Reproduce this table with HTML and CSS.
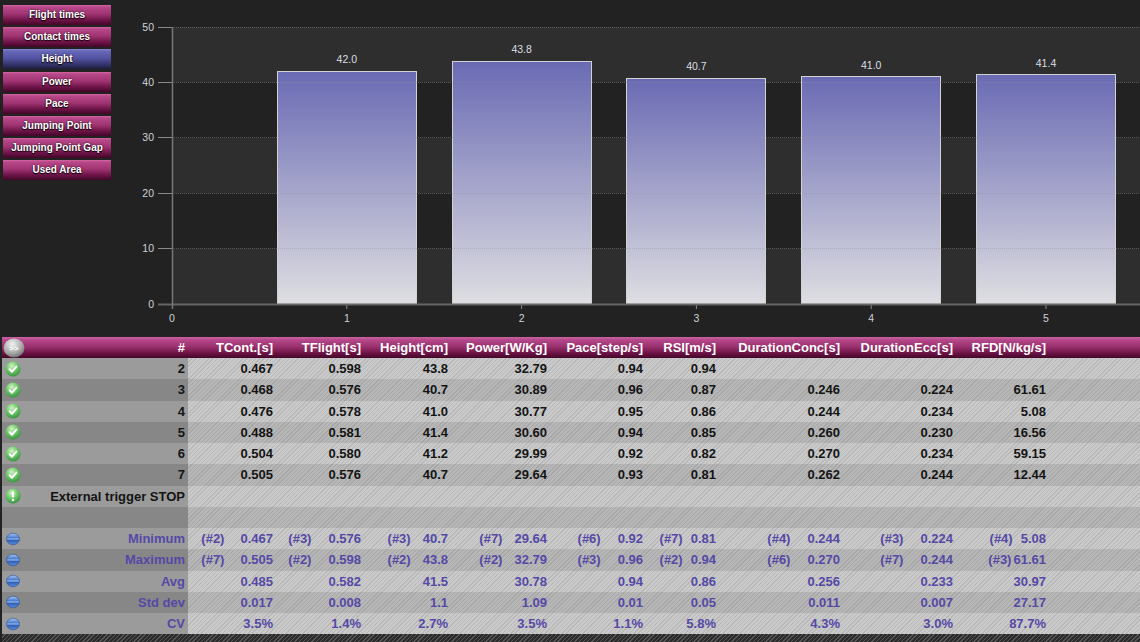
FILE: index.html
```html
<!DOCTYPE html>
<html lang="en">
<head>
<meta charset="utf-8">
<title>Jump results</title>
<link rel="stylesheet" href="styles.css">
</head>
<body>
<svg class="defs" width="0" height="0" aria-hidden="true">
  <defs>
    <radialGradient id="gGreen" cx="0.42" cy="0.3" r="0.78">
      <stop offset="0" stop-color="#d2f4c2"/>
      <stop offset="0.45" stop-color="#72c86e"/>
      <stop offset="1" stop-color="#2a8a33"/>
    </radialGradient>
    <linearGradient id="gBlue" x1="0" y1="0" x2="0" y2="1">
      <stop offset="0" stop-color="#a8c6f2"/>
      <stop offset="0.4" stop-color="#4a7ccc"/>
      <stop offset="0.5" stop-color="#9cbcf0"/>
      <stop offset="0.6" stop-color="#2f5fb4"/>
      <stop offset="1" stop-color="#5a8cdc"/>
    </linearGradient>
    <radialGradient id="gGrey" cx="0.42" cy="0.3" r="0.8">
      <stop offset="0" stop-color="#f2f2f2"/>
      <stop offset="0.6" stop-color="#a6a6a6"/>
      <stop offset="1" stop-color="#5e5e5e"/>
    </radialGradient>
    <linearGradient id="gBar" x1="0" y1="0" x2="0" y2="1">
      <stop offset="0" stop-color="#6a6ab4"/>
      <stop offset="1" stop-color="#dedee2"/>
    </linearGradient>
  </defs>
</svg>

<div class="top">
  <nav class="menu">
    <div class="btn">Flight times</div>
    <div class="btn">Contact times</div>
    <div class="btn on">Height</div>
    <div class="btn">Power</div>
    <div class="btn">Pace</div>
    <div class="btn">Jumping Point</div>
    <div class="btn">Jumping Point Gap</div>
    <div class="btn">Used Area</div>
  </nav>
  <svg class="chart" width="1025" height="337" viewBox="0 0 1025 337">
    <rect class="band" x="57" y="27" width="968" height="55.4"/>
    <rect class="band" x="57" y="137.8" width="968" height="55.4"/>
    <rect class="band" x="57" y="248.6" width="968" height="55.4"/>
    <g class="bars">
      <rect x="162.5" y="71.5" width="139" height="232.5"/>
      <rect x="337.5" y="61.5" width="139" height="242.5"/>
      <rect x="511.5" y="78.5" width="139" height="225.5"/>
      <rect x="686.5" y="76.5" width="139" height="227.5"/>
      <rect x="861.5" y="74.5" width="139" height="229.5"/>
    </g>
    <g class="grid">
      <line x1="57" y1="27.5" x2="1025" y2="27.5"/>
      <line x1="57" y1="82.5" x2="1025" y2="82.5"/>
      <line x1="57" y1="137.5" x2="1025" y2="137.5"/>
      <line x1="57" y1="193.5" x2="1025" y2="193.5"/>
      <line x1="57" y1="248.5" x2="1025" y2="248.5"/>
    </g>
    <g class="ticks">
      <line x1="43" y1="27.5" x2="57" y2="27.5"/>
      <line x1="43" y1="82.5" x2="57" y2="82.5"/>
      <line x1="43" y1="137.5" x2="57" y2="137.5"/>
      <line x1="43" y1="193.5" x2="57" y2="193.5"/>
      <line x1="43" y1="248.5" x2="57" y2="248.5"/>
      <line x1="231.8" y1="305" x2="231.8" y2="309"/>
      <line x1="406.6" y1="305" x2="406.6" y2="309"/>
      <line x1="581.4" y1="305" x2="581.4" y2="309"/>
      <line x1="756.2" y1="305" x2="756.2" y2="309"/>
      <line x1="931" y1="305" x2="931" y2="309"/>
    </g>
    <line class="axis" x1="43" y1="304.5" x2="1025" y2="304.5"/>
    <line class="yaxis" x1="57.5" y1="27" x2="57.5" y2="309"/>
    <g class="ylab">
      <text x="39" y="31">50</text>
      <text x="39" y="86">40</text>
      <text x="39" y="141">30</text>
      <text x="39" y="197">20</text>
      <text x="39" y="252">10</text>
      <text x="39" y="308">0</text>
    </g>
    <g class="xlab">
      <text x="57" y="322">0</text>
      <text x="231.8" y="322">1</text>
      <text x="406.6" y="322">2</text>
      <text x="581.4" y="322">3</text>
      <text x="756.2" y="322">4</text>
      <text x="931" y="322">5</text>
    </g>
    <g class="vlab">
      <text x="231.8" y="63">42.0</text>
      <text x="406.6" y="53">43.8</text>
      <text x="581.4" y="70">40.7</text>
      <text x="756.2" y="69">41.0</text>
      <text x="931" y="67">41.4</text>
    </g>
  </svg>
</div>

<div class="table">
  <div class="row head">
    <div class="c0"><svg class="sph" viewBox="0 0 22 20"><ellipse cx="11" cy="10" rx="10.5" ry="9.5" fill="url(#gGrey)"/><text x="11" y="13" class="sphtxt">&gt;&gt;</text></svg><span>#</span></div>
    <div>TCont.[s]</div><div>TFlight[s]</div><div>Height[cm]</div><div>Power[W/Kg]</div><div>Pace[step/s]</div><div>RSI[m/s]</div><div>DurationConc[s]</div><div>DurationEcc[s]</div><div>RFD[N/kg/s]</div><div></div>
  </div>

  <div class="row">
    <div class="c0"><svg class="ico" viewBox="0 0 16 16"><circle cx="8" cy="8" r="7.6" fill="url(#gGreen)"/><path d="M4.6 8.3 L7 10.7 L11.4 5.6" class="chk"/></svg><span>2</span></div>
    <div>0.467</div><div>0.598</div><div>43.8</div><div>32.79</div><div>0.94</div><div>0.94</div><div></div><div></div><div></div><div></div>
  </div>
  <div class="row d">
    <div class="c0"><svg class="ico" viewBox="0 0 16 16"><circle cx="8" cy="8" r="7.6" fill="url(#gGreen)"/><path d="M4.6 8.3 L7 10.7 L11.4 5.6" class="chk"/></svg><span>3</span></div>
    <div>0.468</div><div>0.576</div><div>40.7</div><div>30.89</div><div>0.96</div><div>0.87</div><div>0.246</div><div>0.224</div><div>61.61</div><div></div>
  </div>
  <div class="row">
    <div class="c0"><svg class="ico" viewBox="0 0 16 16"><circle cx="8" cy="8" r="7.6" fill="url(#gGreen)"/><path d="M4.6 8.3 L7 10.7 L11.4 5.6" class="chk"/></svg><span>4</span></div>
    <div>0.476</div><div>0.578</div><div>41.0</div><div>30.77</div><div>0.95</div><div>0.86</div><div>0.244</div><div>0.234</div><div>5.08</div><div></div>
  </div>
  <div class="row d">
    <div class="c0"><svg class="ico" viewBox="0 0 16 16"><circle cx="8" cy="8" r="7.6" fill="url(#gGreen)"/><path d="M4.6 8.3 L7 10.7 L11.4 5.6" class="chk"/></svg><span>5</span></div>
    <div>0.488</div><div>0.581</div><div>41.4</div><div>30.60</div><div>0.94</div><div>0.85</div><div>0.260</div><div>0.230</div><div>16.56</div><div></div>
  </div>
  <div class="row">
    <div class="c0"><svg class="ico" viewBox="0 0 16 16"><circle cx="8" cy="8" r="7.6" fill="url(#gGreen)"/><path d="M4.6 8.3 L7 10.7 L11.4 5.6" class="chk"/></svg><span>6</span></div>
    <div>0.504</div><div>0.580</div><div>41.2</div><div>29.99</div><div>0.92</div><div>0.82</div><div>0.270</div><div>0.234</div><div>59.15</div><div></div>
  </div>
  <div class="row d">
    <div class="c0"><svg class="ico" viewBox="0 0 16 16"><circle cx="8" cy="8" r="7.6" fill="url(#gGreen)"/><path d="M4.6 8.3 L7 10.7 L11.4 5.6" class="chk"/></svg><span>7</span></div>
    <div>0.505</div><div>0.576</div><div>40.7</div><div>29.64</div><div>0.93</div><div>0.81</div><div>0.262</div><div>0.244</div><div>12.44</div><div></div>
  </div>
  <div class="row">
    <div class="c0"><svg class="ico" viewBox="0 0 16 16"><circle cx="8" cy="8" r="7.6" fill="url(#gGreen)"/><rect x="6.9" y="3.2" width="2.2" height="6.4" rx="1" fill="#fff"/><circle cx="8" cy="12" r="1.2" fill="#fff"/></svg><span>External trigger STOP</span></div>
    <div></div><div></div><div></div><div></div><div></div><div></div><div></div><div></div><div></div><div></div>
  </div>
  <div class="row d">
    <div class="c0"></div>
    <div></div><div></div><div></div><div></div><div></div><div></div><div></div><div></div><div></div><div></div>
  </div>
  <div class="row stat min">
    <div class="c0"><svg class="ico" viewBox="0 0 16 16"><ellipse cx="8" cy="8" rx="6.5" ry="5.8" fill="url(#gBlue)" stroke="#2c4f96" stroke-width="0.6"/></svg><span>Minimum</span></div>
    <div><span class="ref">(#2)</span>0.467</div><div><span class="ref">(#3)</span>0.576</div><div><span class="ref">(#3)</span>40.7</div><div><span class="ref">(#7)</span>29.64</div><div><span class="ref">(#6)</span>0.92</div><div><span class="ref">(#7)</span>0.81</div><div><span class="ref">(#4)</span>0.244</div><div><span class="ref">(#3)</span>0.224</div><div><span class="ref">(#4)</span>5.08</div><div></div>
  </div>
  <div class="row d stat max">
    <div class="c0"><svg class="ico" viewBox="0 0 16 16"><ellipse cx="8" cy="8" rx="6.5" ry="5.8" fill="url(#gBlue)" stroke="#2c4f96" stroke-width="0.6"/></svg><span>Maximum</span></div>
    <div><span class="ref">(#7)</span>0.505</div><div><span class="ref">(#2)</span>0.598</div><div><span class="ref">(#2)</span>43.8</div><div><span class="ref">(#2)</span>32.79</div><div><span class="ref">(#3)</span>0.96</div><div><span class="ref">(#2)</span>0.94</div><div><span class="ref">(#6)</span>0.270</div><div><span class="ref">(#7)</span>0.244</div><div><span class="ref">(#3)</span>61.61</div><div></div>
  </div>
  <div class="row stat">
    <div class="c0"><svg class="ico" viewBox="0 0 16 16"><ellipse cx="8" cy="8" rx="6.5" ry="5.8" fill="url(#gBlue)" stroke="#2c4f96" stroke-width="0.6"/></svg><span>Avg</span></div>
    <div>0.485</div><div>0.582</div><div>41.5</div><div>30.78</div><div>0.94</div><div>0.86</div><div>0.256</div><div>0.233</div><div>30.97</div><div></div>
  </div>
  <div class="row d stat">
    <div class="c0"><svg class="ico" viewBox="0 0 16 16"><ellipse cx="8" cy="8" rx="6.5" ry="5.8" fill="url(#gBlue)" stroke="#2c4f96" stroke-width="0.6"/></svg><span>Std dev</span></div>
    <div>0.017</div><div>0.008</div><div>1.1</div><div>1.09</div><div>0.01</div><div>0.05</div><div>0.011</div><div>0.007</div><div>27.17</div><div></div>
  </div>
  <div class="row stat">
    <div class="c0"><svg class="ico" viewBox="0 0 16 16"><ellipse cx="8" cy="8" rx="6.5" ry="5.8" fill="url(#gBlue)" stroke="#2c4f96" stroke-width="0.6"/></svg><span>CV</span></div>
    <div>3.5%</div><div>1.4%</div><div>2.7%</div><div>3.5%</div><div>1.1%</div><div>5.8%</div><div>4.3%</div><div>3.0%</div><div>87.7%</div><div></div>
  </div>
  <div class="foot"></div>
</div>
</body>
</html>
```

FILE: styles.css
```css
* { box-sizing: border-box; }
html, body { margin: 0; padding: 0; }
body {
  background: #222;
  width: 1140px;
  height: 642px;
  overflow: hidden;
  font-family: "Liberation Sans", Arial, sans-serif;
}
.defs { display: block; width: 0; height: 0; overflow: hidden; }

/* top section */
.top { display: flex; height: 337px; }
.menu {
  width: 115px;
  flex: none;
  padding: 5px 0 0 3px;
  display: flex;
  flex-direction: column;
  gap: 2.2px;
}
.btn {
  width: 108px;
  height: 20px;
  line-height: 20px;
  text-align: center;
  color: #fff;
  font-size: 10px;
  font-weight: bold;
  text-shadow: 0 0 2px #200010, 0 1px 1px #000;
  background: linear-gradient(#d468a2 0, #b8488a 10%, #a03472 45%, #6e1448 75%, #420628 100%);
}
.btn.on {
  background: linear-gradient(#8484d0 0, #6868b8 10%, #5454a4 45%, #363670 75%, #1e1e3c 100%);
}

.chart { display: block; flex: none; }
.chart .band { fill: #2e2e2e; }
.chart .bars rect { fill: url(#gBar); stroke: #d2d2d2; stroke-width: 1; }
.chart .grid line { stroke: rgba(150,150,150,0.45); stroke-width: 1; stroke-dasharray: 1 1; }
.chart .ticks line { stroke: #8a8a8a; stroke-width: 1; }
.chart .axis { stroke: #666; stroke-width: 2; }
.chart .yaxis { stroke: #777; stroke-width: 1.5; }
.chart text { font-family: "Liberation Sans", Arial, sans-serif; font-size: 10.5px; fill: #cdd3db; }
.chart .ylab text { text-anchor: end; }
.chart .xlab text, .chart .vlab text { text-anchor: middle; }
.chart .vlab text { fill: #dcdfe4; }

/* table */
.table {
  margin-left: 2px;
  background: repeating-linear-gradient(135deg, #cacaca 0 2px, #b8b8b8 2px 3px);
}
.row {
  display: grid;
  grid-template-columns: 186px 88px 88px 87px 99px 96px 73px 124px 113px 93px 1fr;
  height: 21.25px;
  font-size: 13px;
  font-weight: bold;
  color: #141414;
}
.row > div {
  padding-right: 3px;
  text-align: right;
  line-height: 21px;
  white-space: nowrap;
}
.row.d { background: rgba(0,0,0,0.09); }
.row .c0 {
  display: flex;
  align-items: center;
  justify-content: space-between;
  padding: 0 3px 0 3px;
  background: #9b9b9b;
}
.row.d .c0 { background: #878787; }

.head {
  height: 21px;
  color: #fff;
  background: linear-gradient(#cc62a0 0, #b4478a 15%, #982f6c 48%, #6a1244 78%, #44072a 100%);
}
.head .c0 { background: none; padding-left: 1px; }
.sph { width: 22px; height: 20px; display: block; flex: none; }
.sphtxt { font-family: "Liberation Sans", Arial, sans-serif; font-size: 8px; font-weight: bold; fill: #fff; text-anchor: middle; }

.ico { width: 16px; height: 16px; display: block; flex: none; }
.chk { fill: none; stroke: #fff; stroke-width: 2; stroke-linecap: round; stroke-linejoin: round; }

.stat { color: #5549a6; }
.stat .ref { margin-right: 16px; }
.stat > div:nth-child(3) .ref { margin-right: 17px; }
.stat > div:nth-child(4) .ref { margin-right: 12px; }
.stat > div:nth-child(5) .ref { margin-right: 12px; }
.stat > div:nth-child(6) .ref { margin-right: 17px; }
.stat > div:nth-child(7) .ref { margin-right: 8px; }
.stat > div:nth-child(8) .ref { margin-right: 17px; }
.stat > div:nth-child(9) .ref { margin-right: 17px; }
.stat > div:nth-child(10) .ref { margin-right: 8px; }
.max > div:nth-child(10) .ref { margin-right: 2px; }

.foot {
  height: 8px;
  background: repeating-linear-gradient(135deg, #2c2c2c 0 2px, #565656 2px 3px);
}
```
